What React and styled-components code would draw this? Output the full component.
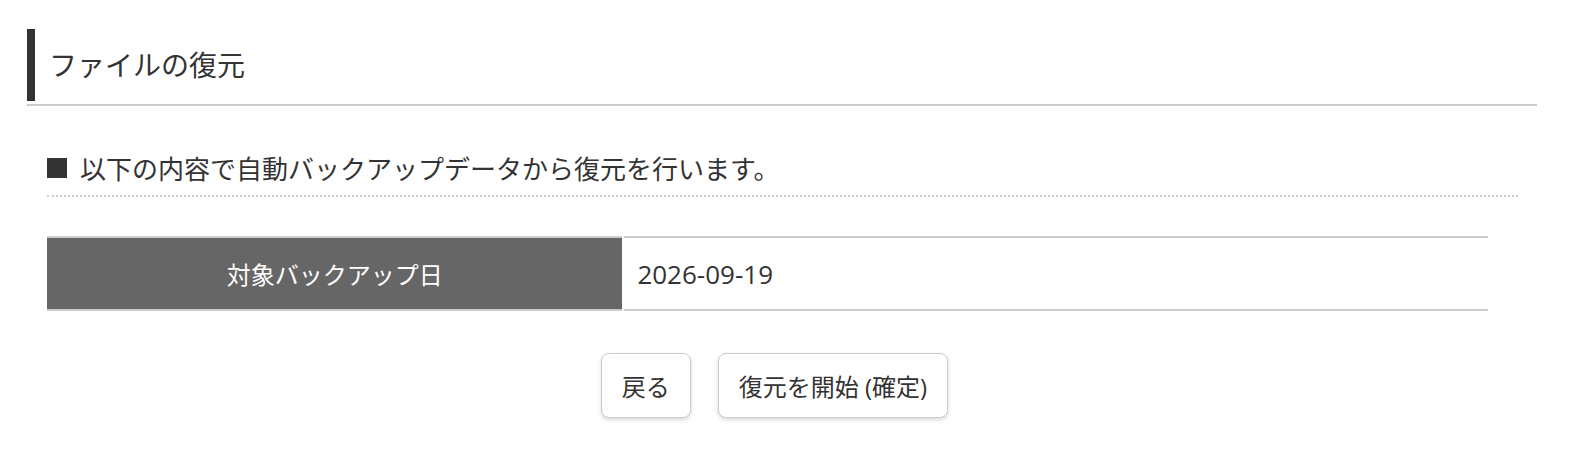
import React from 'react';
import styled, { createGlobalStyle } from 'styled-components';

const GlobalStyle = createGlobalStyle`
    body {
        margin: 0;
        background: #fff;
        color: #333;
        font-family: 'Open Sans', 'Noto Sans CJK JP', sans-serif;
    }
`;

const Page = styled.div`
    padding: 29px 45px 40px 27px;
`;

const PageHeader = styled.div`
    padding-bottom: 3px;
    border-bottom: 2px solid #ccc;
`;

const Title = styled.h1`
    margin: 0;
    height: 72px;
    line-height: 72px;
    padding-left: 14px;
    border-left: 8px solid #333;
    font-size: 28px;
    font-weight: normal;
    color: #333;
`;

const Section = styled.div`
    margin: 42px 19px 0 20px;
`;

const SubHeading = styled.h2`
    margin: 0;
    display: flex;
    align-items: center;
    height: 40px;
    padding-bottom: 7px;
    border-bottom: 2px dotted #ccc;
    font-size: 26px;
    font-weight: normal;
    color: #333;

    &::before {
        content: '';
        width: 20px;
        height: 20px;
        margin-right: 13px;
        background: #333;
    }
`;

const InfoTable = styled.table`
    width: calc(100% - 30px);
    margin-top: 39px;
    border-collapse: collapse;
    border-top: 2px solid #ccc;
    border-bottom: 2px solid #ccc;
`;

const HeadCell = styled.th`
    width: 40%;
    height: 71px;
    padding: 0;
    background: #666;
    color: #fff;
    font-size: 24px;
    font-weight: normal;
    text-align: center;
    border-right: 2px solid #fff;
`;

const DataCell = styled.td`
    padding: 0 13px;
    font-size: 26px;
    color: #333;
`;

const ButtonRow = styled.div`
    width: calc(100% - 30px);
    display: flex;
    justify-content: center;
    gap: 27px;
    margin-top: 42px;
    padding-left: 14px;
    box-sizing: border-box;
`;

const Button = styled.button`
    height: 65px;
    padding: 0 20px;
    background: #fff;
    border: 1px solid #ccc;
    border-radius: 8px;
    box-shadow: 0 2px 4px rgba(0, 0, 0, 0.15);
    font-family: inherit;
    font-size: 24px;
    color: #333;
    cursor: pointer;
`;

function App() {
    return (
        <>
            <GlobalStyle />
            <Page>
                <PageHeader>
                    <Title>ファイルの復元</Title>
                </PageHeader>
                <Section>
                    <SubHeading>以下の内容で自動バックアップデータから復元を行います。</SubHeading>
                    <InfoTable>
                        <tbody>
                            <tr>
                                <HeadCell>対象バックアップ日</HeadCell>
                                <DataCell>2026-09-19</DataCell>
                            </tr>
                        </tbody>
                    </InfoTable>
                    <ButtonRow>
                        <Button type="button">戻る</Button>
                        <Button type="submit">復元を開始 (確定)</Button>
                    </ButtonRow>
                </Section>
            </Page>
        </>
    );
}

export default App;
